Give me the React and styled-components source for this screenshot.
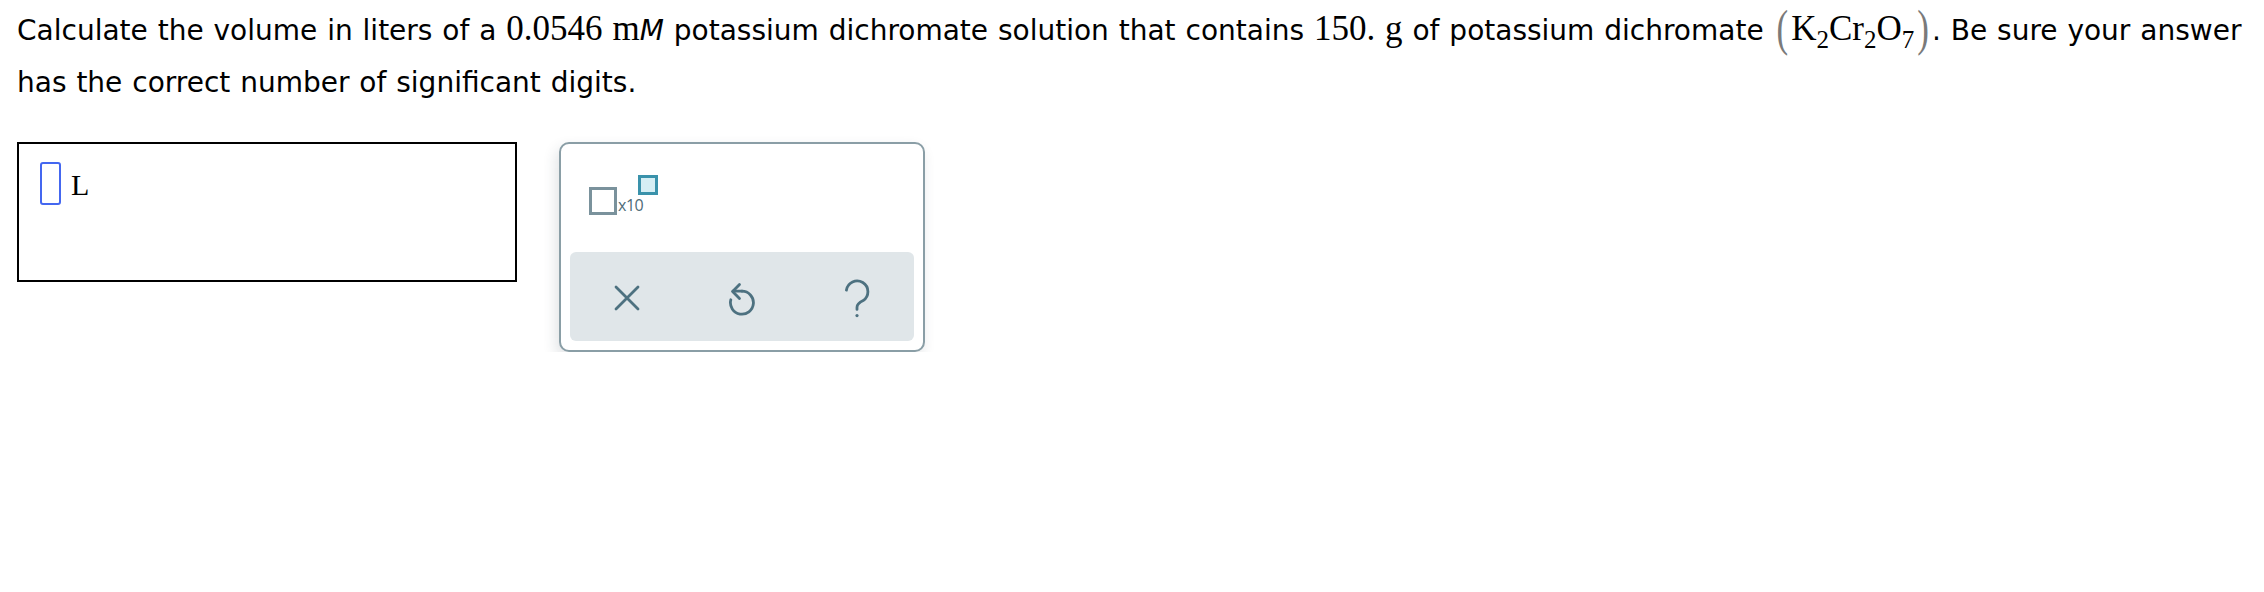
import styled, { createGlobalStyle } from "styled-components";

const GlobalStyle = createGlobalStyle`
  body {
    margin: 0;
    background: #fff;
  }
`;

const Page = styled.div`
  padding: 5px 17px 0 17px;
`;

const Question = styled.p`
  margin: 0;
  font-family: "DejaVu Sans", Verdana, sans-serif;
  font-size: 28px;
  line-height: 52px;
  word-spacing: 1px;
  color: #000;
`;

const Num = styled.span`
  font-family: "Liberation Serif", "Times New Roman", serif;
  font-size: 35px;
  line-height: 1;
`;

const ItalicSans = styled.span`
  font-family: "DejaVu Sans", Verdana, sans-serif;
  font-style: italic;
  font-size: 28px;
`;

const Formula = styled.span`
  font-family: "Liberation Serif", "Times New Roman", serif;
  font-size: 35px;
  line-height: 1;
`;

const Paren = styled.span`
  display: inline-block;
  color: #7a7a7a;
  transform: scaleY(1.45);
  margin: 0 3px;
`;

const Sub = styled.sub`
  font-size: 25px;
  vertical-align: -8px;
  line-height: 0;
`;

const Workarea = styled.div`
  display: flex;
  align-items: flex-start;
  gap: 42px;
  margin-top: 33px;
`;

const AnswerBox = styled.div`
  box-sizing: border-box;
  width: 500px;
  height: 140px;
  border: 2px solid #000;
  padding: 18px 21px;
  display: flex;
  align-items: flex-start;
  gap: 10px;
`;

const Cursor = styled.div`
  box-sizing: border-box;
  width: 21px;
  height: 43px;
  border: 2px solid #4467f0;
  border-radius: 3px;
`;

const UnitLabel = styled.span`
  font-family: "Liberation Serif", "Times New Roman", serif;
  font-size: 30px;
  line-height: 1;
  margin-top: 8px;
  color: #000;
`;

const Palette = styled.div`
  box-sizing: border-box;
  width: 366px;
  height: 210px;
  border: 2px solid #8a9ea6;
  border-radius: 10px;
  padding: 9px;
  background: #fff;
  box-shadow: -3px 6px 14px rgba(40, 60, 70, 0.14);
  display: flex;
  flex-direction: column;
`;

const KeyArea = styled.div`
  flex: 1;
  padding: 22px 19px;
`;

const SciKey = styled.div`
  display: inline-flex;
  align-items: flex-end;
`;

const BaseBox = styled.div`
  box-sizing: border-box;
  width: 28px;
  height: 28px;
  border: 3px solid #7a929c;
  margin-top: 12px;
`;

const TimesTen = styled.span`
  font-family: "Open Sans", "Inter", sans-serif;
  font-size: 16px;
  line-height: 1;
  color: #4d6b78;
  margin-left: 1px;
  letter-spacing: -0.5px;
  padding-bottom: 2px;
`;

const ExpBox = styled.div`
  box-sizing: border-box;
  align-self: flex-start;
  width: 20px;
  height: 20px;
  border: 3px solid #3a92ab;
  background: #d5eef4;
  margin-left: -5px;
`;

const Toolbar = styled.div`
  height: 89px;
  background: #e0e6e9;
  border-radius: 6px;
  display: grid;
  grid-template-columns: repeat(3, 1fr);
  align-items: center;
  justify-items: center;
`;

const ToolButton = styled.div`
  display: flex;
  align-items: center;
  justify-content: center;
  color: #4d7180;
  margin-top: ${(p) => p.$shift || 0}px;
`;

function ClearIcon() {
  return (
    <svg width="26" height="26" viewBox="0 0 26 26" fill="none" stroke="currentColor" strokeWidth="2.8" strokeLinecap="round">
      <path d="M2 2 L24 24 M24 2 L2 24" />
    </svg>
  );
}

function UndoIcon() {
  return (
    <svg width="28" height="34" viewBox="0 0 28 34" fill="none" stroke="currentColor" strokeWidth="2.8" strokeLinecap="round" strokeLinejoin="round">
      <path d="M14 9.2 A11.5 11.5 0 1 1 2.8 17.8" />
      <path d="M14 9.2 H5" />
      <path d="M11.5 2.5 L4.6 9.6 L11.5 16.6" />
    </svg>
  );
}

function HelpIcon() {
  return (
    <svg width="28" height="40" viewBox="0 0 28 40" fill="none" stroke="currentColor" strokeWidth="2.8" strokeLinecap="round">
      <path d="M3.4 11.2 A10.8 10.8 0 1 1 20.2 21.6 C16.2 23.6 14 25 14 28.2 V30.4" />
      <circle cx="14" cy="36.6" r="1.6" fill="currentColor" stroke="none" />
    </svg>
  );
}

export default function App() {
  return (
    <>
      <GlobalStyle />
      <Page>
        <Question>
          Calculate the volume in liters of a <Num>0.0546</Num>{" "}
          <Num>
            m<ItalicSans>M</ItalicSans>
          </Num>{" "}
          potassium dichromate solution that contains <Num>150.</Num> <Num>g</Num> of potassium dichromate{" "}
          <Formula>
            <Paren>(</Paren>K<Sub>2</Sub>Cr<Sub>2</Sub>O<Sub>7</Sub>
            <Paren>)</Paren>
          </Formula>
          . Be sure your answer
          <br />
          has the correct number of significant digits.
        </Question>
        <Workarea>
          <AnswerBox>
            <Cursor />
            <UnitLabel>L</UnitLabel>
          </AnswerBox>
          <Palette>
            <KeyArea>
              <SciKey>
                <BaseBox />
                <TimesTen>x10</TimesTen>
                <ExpBox />
              </SciKey>
            </KeyArea>
            <Toolbar>
              <ToolButton $shift={2}>
                <ClearIcon />
              </ToolButton>
              <ToolButton $shift={4}>
                <UndoIcon />
              </ToolButton>
              <ToolButton $shift={4}>
                <HelpIcon />
              </ToolButton>
            </Toolbar>
          </Palette>
        </Workarea>
      </Page>
    </>
  );
}
